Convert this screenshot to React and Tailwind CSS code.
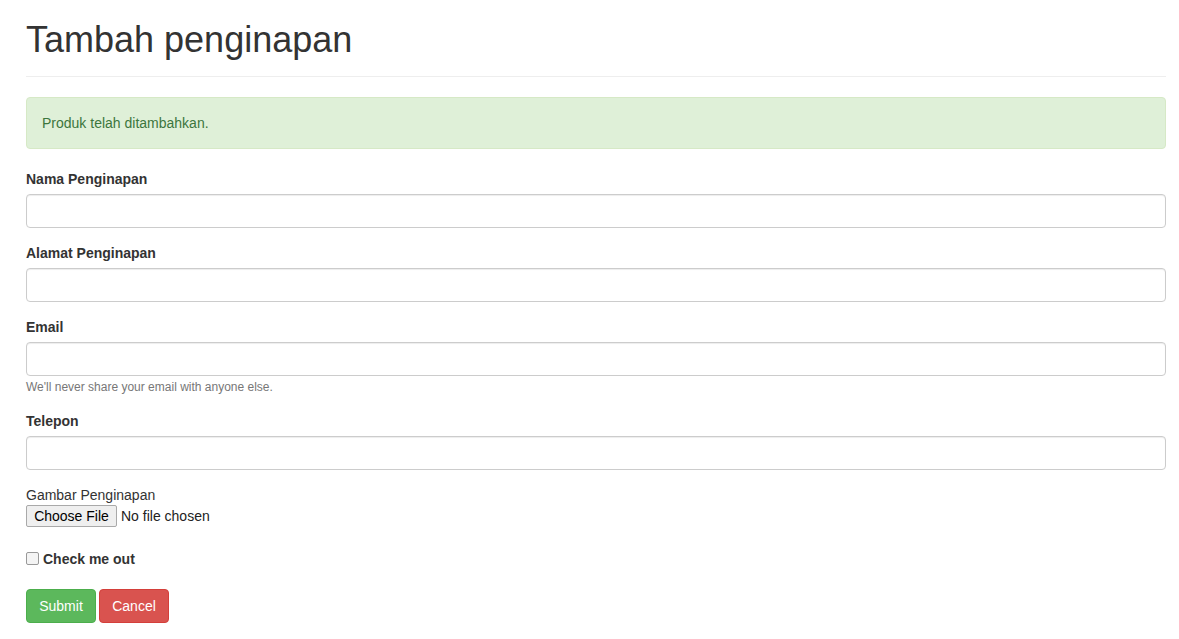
import React from "react";

const font = { fontFamily: '"Liberation Sans", Arial, Helvetica, sans-serif' };

function Field({ label, children }) {
  return (
    <div className="mb-[15px]">
      <label className="block mb-[5px] font-bold text-[14px] leading-[20px] text-[#333]">{label}</label>
      <input
        type="text"
        className="block w-full h-[34px] px-[12px] py-[6px] text-[14px] text-[#555] bg-white border border-[#ccc] rounded-[4px] shadow-[inset_0_1px_1px_rgba(0,0,0,0.075)] outline-none"
      />
      {children}
    </div>
  );
}

export default function App() {
  return (
    <div className="bg-white min-h-[639px] overflow-hidden font-['Liberation_Sans',Arial,sans-serif] text-[14px] leading-[20px] text-[#333]" style={font}>
      <div className="ml-[26px] w-[1140px]">
        <div className="mt-[20px] pb-[16px] border-b border-[#eee]">
          <h1 className="text-[36px] leading-[40px] font-normal text-[#333]">Tambah penginapan</h1>
        </div>

        <div className="mt-[20px] mb-[20px] p-[15px] bg-[#dff0d8] border border-[#d6e9c6] rounded-[4px] text-[#3c763d] text-[14px] leading-[20px]">
          Produk telah ditambahkan.
        </div>

        <form>
          <Field label="Nama Penginapan" />
          <Field label="Alamat Penginapan" />
          <Field label="Email">
            <div className="h-[20px] pt-[1px] leading-[20px] text-[12px] text-[#777]">
              We'll never share your email with anyone else.
            </div>
          </Field>
          <Field label="Telepon" />

          <div className="mb-[22px]">
            <div className="text-[14px] leading-[20px] text-[#333]">Gambar Penginapan</div>
            <div className="flex items-center h-[22px]">
              <span className="inline-flex items-center justify-center h-[22px] w-[91px] border border-[#a9a9a9] bg-[#efefef] rounded-[2px] text-[14px] text-black">
                Choose File
              </span>
              <span className="ml-[4px] text-[14px] text-[#222]">No file chosen</span>
            </div>
          </div>

          <div className="mb-[20px] flex items-start h-[20px]">
            <span className="mt-[3px] w-[13px] h-[13px] border border-[#999] rounded-[2px] bg-[#f4f4f4]"></span>
            <span className="ml-[4px] font-bold text-[14px] leading-[20px] text-[#333]">Check me out</span>
          </div>

          <div className="flex gap-[3px]">
            <button type="button" className="h-[34px] w-[70px] bg-[#5cb85c] border border-[#4cae4c] rounded-[4px] text-white text-[14px]">
              Submit
            </button>
            <button type="button" className="h-[34px] w-[70px] bg-[#d9534f] border border-[#d43f3a] rounded-[4px] text-white text-[14px]">
              Cancel
            </button>
          </div>
        </form>
      </div>
    </div>
  );
}
